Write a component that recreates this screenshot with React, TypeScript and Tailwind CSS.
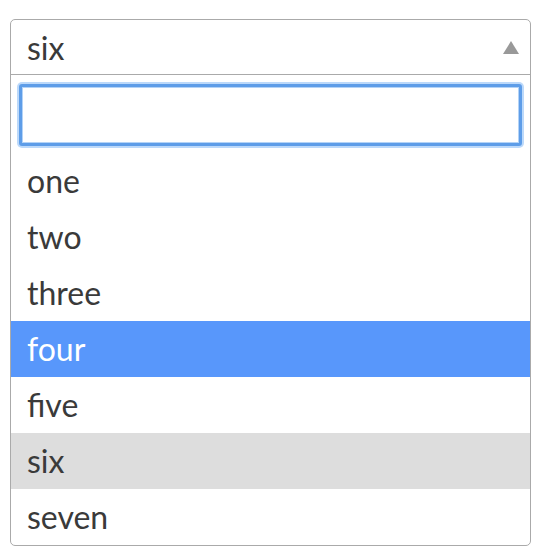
import React from "react";

const options = ["one", "two", "three", "four", "five", "six", "seven"];

export default function App() {
  return (
    <div className="w-[540px] h-[560px] bg-white pt-[19px] pl-[10px]" style={{ fontFamily: "Lato, 'Open Sans', sans-serif" }}>
      <div className="w-[521px] border border-[#aaaaaa] rounded-[5px] overflow-hidden text-[32px] text-[#3a3a3a]">
        <div className="h-[55px] flex items-center justify-between pl-[16px] pr-[11px] border-b border-[#aaaaaa]">
          <span className="leading-[55px]">six</span>
          <svg width="16" height="13" viewBox="0 0 16 13">
            <polygon points="8,0 16,13 0,13" fill="#999999" />
          </svg>
        </div>
        <div className="p-[8px] pt-[9px] pb-[7px]">
          <div className="h-[62px] w-full rounded-[3px] border-[3px] border-[#5e9de8] shadow-[0_0_0_2px_#bcd9fa,inset_0_0_0_1px_#b3d3f7] bg-white" />
        </div>
        <div>
          {options.map((o) => (
            <div
              key={o}
              className={
                "h-[56px] flex items-center pl-[16px] leading-[56px] " +
                (o === "four" ? "bg-[#5897fb] text-white" : o === "six" ? "bg-[#dddddd]" : "")
              }
            >
              {o}
            </div>
          ))}
        </div>
      </div>
    </div>
  );
}
